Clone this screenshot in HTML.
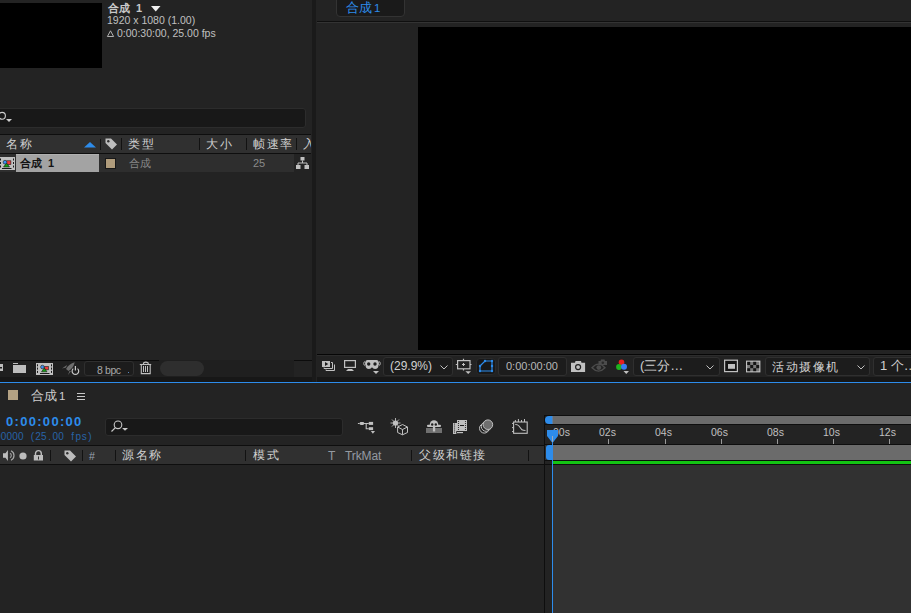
<!DOCTYPE html>
<html><head><meta charset="utf-8">
<style>
*{margin:0;padding:0;box-sizing:border-box}
html,body{width:911px;height:613px;overflow:hidden;background:#232323;font-family:"Liberation Sans",sans-serif;color:#c8c8c8}
.a{position:absolute}
.t{position:absolute;white-space:nowrap;line-height:1}
svg{position:absolute;overflow:visible}
.sep{position:absolute;width:1px;background:#121212}
.dd{position:absolute;background:#1c1c1c;border:1px solid #2f2f2f;border-radius:3px}
</style></head><body>
<!-- PROJECT PANEL -->
<div class="a" style="left:0;top:0;width:312px;height:382px;background:#232323"></div>
<div class="a" style="left:0;top:3px;width:102px;height:65px;background:#000"></div>
<div class="t" style="left:108px;top:3px;font-size:11px;font-weight:bold;color:#c8c8c8">合成&nbsp;&nbsp;1</div>
<svg style="left:151px;top:6px" width="10" height="6"><path d="M0 0H9.5L4.75 5.5Z" fill="#f0f0f0"/></svg>
<div class="t" style="left:107px;top:15px;font-size:10.5px;color:#c0c0c0">1920 x 1080 (1.00)</div>
<svg style="left:107px;top:30px" width="8" height="8"><path d="M3.5 0.8L6.6 6.5H0.4Z" fill="none" stroke="#c0c0c0" stroke-width="0.9"/></svg>
<div class="t" style="left:117px;top:28px;font-size:10.5px;color:#c0c0c0">0:00:30:00, 25.00 fps</div>

<!-- search -->
<div class="a" style="left:-4px;top:108px;width:310px;height:20px;background:#181818;border:1px solid #2c2c2c;border-radius:3px"></div>
<svg style="left:0;top:112px" width="14" height="12"><circle cx="2" cy="3.8" r="3.4" fill="none" stroke="#cfcfcf" stroke-width="1.1"/><path d="M6 7H12L9 10Z" fill="#cfcfcf"/></svg>

<!-- header -->
<div class="a" style="left:0;top:134px;width:311px;height:1px;background:#0e0e0e"></div>
<div class="a" style="left:0;top:135px;width:311px;height:18px;background:#303030"></div>
<div class="a" style="left:0;top:153px;width:311px;height:1px;background:#0e0e0e"></div>
<div class="t" style="left:6px;top:138px;font-size:12px;letter-spacing:1.5px;color:#d0d0d0">名称</div>
<svg style="left:84px;top:142px" width="13" height="6"><path d="M0 5.5L6 0L12 5.5Z" fill="#2d8ceb"/></svg>
<div class="sep" style="left:100px;top:139px;height:11px"></div>
<svg style="left:105px;top:138px" width="13" height="12"><path d="M0.5 0.5H6L12 6.5L7 11.5L0.5 5Z" fill="#bdbdbd"/><circle cx="3.3" cy="3.3" r="1.2" fill="#303030"/></svg>
<div class="sep" style="left:121px;top:138px;height:12px"></div>
<div class="t" style="left:128px;top:138px;font-size:12px;letter-spacing:1.5px;color:#d0d0d0">类型</div>
<div class="sep" style="left:199px;top:138px;height:12px"></div>
<div class="t" style="left:206px;top:138px;font-size:12px;letter-spacing:1.5px;color:#d0d0d0">大小</div>
<div class="sep" style="left:246px;top:138px;height:12px"></div>
<div class="t" style="left:253px;top:138px;font-size:12px;letter-spacing:1.5px;color:#d0d0d0">帧速率</div>
<div class="sep" style="left:296px;top:138px;height:12px"></div>
<div class="t" style="left:303px;top:138px;font-size:12px;color:#d0d0d0;width:8px;overflow:hidden">入</div>

<!-- row -->
<div class="a" style="left:0;top:154px;width:294px;height:18px;background:#2e2e2e"></div>
<div class="a" style="left:16px;top:154px;width:83px;height:18px;background:#a3a3a3;border-top:1px solid #b0b0b0"></div>
<div class="t" style="left:20px;top:158px;font-size:11px;font-weight:bold;color:#141414">合成&nbsp;&nbsp;1</div>
<div class="a" style="left:105px;top:158px;width:11px;height:11px;background:#b09c7c;border:1px solid #181818"></div>
<div class="t" style="left:129px;top:158px;font-size:11px;color:#8a8a8a">合成</div>
<div class="t" style="left:253px;top:158px;font-size:11px;color:#8a8a8a">25</div>
<svg style="left:296px;top:157px" width="13" height="12"><rect x="4.5" y="0" width="4" height="3.5" fill="#c0c0c0"/><path d="M6.5 3.5V6M2 8V6H11V8" stroke="#c0c0c0" fill="none"/><rect x="0" y="8" width="4.5" height="4" fill="#c0c0c0"/><rect x="8.5" y="8" width="4.5" height="4" fill="#c0c0c0"/></svg>
<svg style="left:-2px;top:157px" width="17" height="13"><rect x="0" y="0" width="17" height="13" fill="#c0c0c0"/><g fill="#1a1a1a"><rect x="2" y="1.5" width="1" height="2"/><rect x="2" y="5" width="1" height="2"/><rect x="2" y="8.5" width="1" height="2"/><rect x="15" y="1.5" width="1" height="2"/><rect x="15" y="5" width="1" height="2"/><rect x="15" y="8.5" width="1" height="2"/><rect x="4" y="11" width="9.5" height="1"/></g><rect x="8.7" y="3.8" width="4.2" height="3.7" fill="#f03a3a" stroke="#1a1a1a" stroke-width="0.6"/><path d="M5.5 10L8.6 6L11.5 10Z" fill="#12a012" stroke="#1a1a1a" stroke-width="0.6"/><circle cx="7" cy="5.2" r="1.9" fill="#3a90f0" stroke="#1a1a1a" stroke-width="0.6"/></svg>

<!-- project bottom toolbar -->
<div class="a" style="left:0;top:360px;width:294px;height:17px;background:#1f1f1f"></div>
<div class="a" style="left:0;top:360px;width:159px;height:1px;background:#0c0c0c"></div>
<div class="a" style="left:294px;top:360px;width:18px;height:1px;background:#0c0c0c"></div>
<svg style="left:-4px;top:364px" width="8" height="8"><rect x="0" y="0" width="7" height="7" fill="#bdbdbd"/><rect x="2" y="3" width="4" height="1.5" fill="#1f1f1f"/></svg>
<svg style="left:13px;top:363px" width="14" height="10"><rect x="0" y="0" width="5" height="1" fill="#bdbdbd"/><rect x="0" y="2" width="13" height="8" fill="#bdbdbd"/></svg>
<svg style="left:36px;top:363px" width="17" height="12"><rect x="0" y="0" width="17" height="12" fill="#c0c0c0"/><g fill="#1a1a1a"><rect x="1" y="1.3" width="1" height="2"/><rect x="1" y="4.6" width="1" height="2"/><rect x="1" y="7.9" width="1" height="2"/><rect x="15" y="1.3" width="1" height="2"/><rect x="15" y="4.6" width="1" height="2"/><rect x="15" y="7.9" width="1" height="2"/><rect x="4" y="10" width="9.5" height="1"/></g><rect x="8.7" y="3.5" width="3.7" height="3.3" fill="#f03a3a" stroke="#1a1a1a" stroke-width="0.6"/><path d="M5.5 8.8L8.4 5L11 8.8Z" fill="#12a012" stroke="#1a1a1a" stroke-width="0.6"/><circle cx="6.4" cy="4" r="1.8" fill="#3a90f0" stroke="#1a1a1a" stroke-width="0.6"/></svg>
<svg style="left:60px;top:359px" width="22" height="18"><path d="M14.7 3.2C11 4 8 6.5 6 10L8.5 12C11.5 10.5 14 7 14.7 3.2Z" fill="#6e6e6e"/><path d="M2 9.5L7 6L6 8.5Z" fill="#6e6e6e"/><path d="M8 16L11 12L9.5 12Z" fill="#6e6e6e"/><path d="M13.3 9.6A3.3 3.3 0 1 0 17.5 9.6" fill="none" stroke="#c8c8c8" stroke-width="1.2"/><path d="M15.4 7V11.5" stroke="#c8c8c8" stroke-width="1.2"/></svg>
<div class="dd" style="left:84px;top:361px;width:50px;height:15px"></div>
<div class="t" style="left:97px;top:365px;font-size:10.5px;letter-spacing:-0.4px;color:#a8a8a8">8 bpc</div>
<div class="a" style="left:128px;top:372px;width:1px;height:1px;background:#5a8ac0"></div>
<svg style="left:136px;top:359px" width="20" height="18"><path d="M3.8 5.5H15.2" stroke="#c0c0c0" stroke-width="1.1"/><path d="M7.5 5V4Q9.8 2.2 12.2 4V5" fill="none" stroke="#c0c0c0" stroke-width="1.1"/><path d="M5.3 6V14.6H14.2V6" fill="none" stroke="#c0c0c0" stroke-width="1.1"/><path d="M7.5 7V13M9.5 7V13M11.5 7V13" stroke="#c0c0c0" stroke-width="1"/></svg>
<div class="a" style="left:160px;top:361px;width:44px;height:15px;background:#2e2e2e;border-radius:8px"></div>
<div class="a" style="left:0;top:377px;width:312px;height:5px;background:#171717"></div>

<!-- separator -->
<div class="a" style="left:312px;top:0;width:4px;height:382px;background:#1a1a1a"></div>

<!-- VIEWER PANEL -->
<div class="a" style="left:316px;top:0;width:595px;height:382px;background:#232323"></div>
<div class="a" style="left:336px;top:-4px;width:69px;height:21px;background:#1a1a1a;border:1px solid #333;border-radius:4px"></div>
<div class="t" style="left:346px;top:1px;font-size:13px;color:#2d8ceb">合成<span style="font-size:11.5px;margin-left:2px">1</span></div>
<div class="a" style="left:317px;top:21px;width:594px;height:1px;background:#0f0f0f"></div>
<div class="a" style="left:317px;top:22px;width:594px;height:1px;background:#333"></div>
<div class="a" style="left:418px;top:27px;width:493px;height:323px;background:#000"></div>
<div class="a" style="left:317px;top:354px;width:594px;height:1px;background:#060606"></div>
<div class="a" style="left:317px;top:355px;width:594px;height:1px;background:#2c2c2c"></div>
<div class="a" style="left:317px;top:356px;width:594px;height:21px;background:#222"></div>
<div class="a" style="left:317px;top:377px;width:594px;height:5px;background:#171717"></div>
<!-- viewer toolbar icons -->
<svg style="left:322px;top:361px" width="14" height="11"><rect x="0" y="0" width="8" height="6" fill="#c0c0c0"/><path d="M3 1V5L6.2 3Z" fill="#1a1a1a"/><path d="M9 1.5H10.5V7.5H2V6.5" stroke="#c0c0c0" fill="none"/><path d="M12.5 3.5V9.5H4V8.5" stroke="#c0c0c0" fill="none"/></svg>
<svg style="left:344px;top:360px" width="13" height="12"><rect x="0.6" y="0.6" width="10.8" height="6.8" fill="none" stroke="#c0c0c0" stroke-width="1.2"/><path d="M4 9H8L10 11H2Z" fill="#c0c0c0"/></svg>
<svg style="left:363px;top:359px" width="18" height="16"><path d="M2.5 2.5Q2.5 1 4.5 1H13.5Q15.5 1 15.5 2.5V6Q15.5 10 12 10Q10 10 9 8.2Q8 10 6 10Q2.5 10 2.5 6Z" fill="#c0c0c0"/><circle cx="5.7" cy="5" r="1.7" fill="#1e1e1e"/><circle cx="12" cy="5" r="1.7" fill="#1e1e1e"/><ellipse cx="1.6" cy="4.5" rx="0.9" ry="1.7" fill="none" stroke="#c0c0c0" stroke-width="0.9"/><ellipse cx="16.4" cy="4.5" rx="0.9" ry="1.7" fill="none" stroke="#c0c0c0" stroke-width="0.9"/><path d="M10 12H16L13 15Z" fill="#c0c0c0"/></svg>
<div class="dd" style="left:383px;top:357px;width:70px;height:19px"></div>
<div class="t" style="left:390px;top:360px;font-size:12px;color:#d0d0d0">(29.9%)</div>
<svg style="left:440px;top:365px" width="8" height="5"><path d="M0.5 0.5L4 4L7.5 0.5" fill="none" stroke="#c0c0c0"/></svg>
<svg style="left:455px;top:358px" width="18" height="17"><rect x="2.6" y="2.6" width="12.4" height="8.2" fill="none" stroke="#c0c0c0" stroke-width="1.2"/><path d="M8.5 0.8V2.5M8.5 11V12.5M0.8 6.5H2.5M15 6.5H16.5" stroke="#c0c0c0" stroke-width="1.2"/><path d="M8.5 5V8M7 6.5H10" stroke="#c0c0c0"/><path d="M10.4 13.2H16L13.2 16Z" fill="#c0c0c0"/></svg>
<div class="a" style="left:476px;top:358px;width:20px;height:17px;background:#181818;border:1px solid #2a2a2a;border-radius:4px"></div>
<svg style="left:476px;top:358px" width="20" height="17"><path d="M4 8L9 3H16V13H4Z" fill="none" stroke="#2d8ceb" stroke-width="1.2"/><g fill="#2d8ceb"><circle cx="4" cy="8" r="1.2"/><circle cx="9" cy="3" r="1.2"/><circle cx="16" cy="3" r="1.2"/><circle cx="16" cy="8" r="1.2"/><circle cx="16" cy="13" r="1.2"/><circle cx="4" cy="13" r="1.2"/></g></svg>
<div class="dd" style="left:498px;top:357px;width:69px;height:19px"></div>
<div class="t" style="left:506px;top:361px;font-size:11px;color:#b8b8b8">0:00:00:00</div>
<svg style="left:570px;top:360px" width="16" height="13"><path d="M1 2.7H5L5.5 1H11L11.5 2.7H15.1V11.9H1Z" fill="#c0c0c0"/><circle cx="8.1" cy="7.1" r="2.5" fill="none" stroke="#1e1e1e" stroke-width="1.2"/></svg>
<svg style="left:591px;top:358px" width="18" height="15"><path d="M1 9.8Q7.5 2.5 14 9.8Q7.5 16.5 1 9.8Z" fill="none" stroke="#4c4c4c" stroke-width="1.4"/><circle cx="7.8" cy="9.6" r="2.4" fill="#4c4c4c"/><path d="M7.5 3H9.5L10 1.5H13.5L14 3H16V7H7.5Z" fill="#4c4c4c"/><circle cx="11.8" cy="4.8" r="1.3" fill="#2a2a2a"/></svg>
<svg style="left:616px;top:359px" width="14" height="16"><circle cx="5.5" cy="3.3" r="2.8" fill="#e81e1e"/><circle cx="3" cy="8" r="2.9" fill="#1eb41e"/><circle cx="8" cy="7.7" r="3" fill="#3a7cf0"/><path d="M7.5 12H13L10.25 15Z" fill="#c0c0c0"/></svg>
<div class="dd" style="left:633px;top:357px;width:87px;height:19px"></div>
<div class="t" style="left:640px;top:359px;font-size:13px;color:#d0d0d0">(三分…</div>
<svg style="left:706px;top:365px" width="8" height="5"><path d="M0.5 0.5L4 4L7.5 0.5" fill="none" stroke="#c0c0c0"/></svg>
<svg style="left:724px;top:359px" width="15" height="14"><rect x="0.6" y="1.2" width="12.8" height="11.4" fill="#141414" stroke="#c0c0c0" stroke-width="1.2"/><rect x="4" y="5" width="7" height="4.8" fill="#c0c0c0"/></svg>
<svg style="left:746px;top:360px" width="15" height="13"><rect x="0.6" y="1.2" width="13.2" height="10.6" fill="#7a7a7a" stroke="#c0c0c0" stroke-width="1.2"/><g fill="#141414"><rect x="1.2" y="1.8" width="3" height="3.2"/><rect x="7.2" y="1.8" width="3" height="3.2"/><rect x="4.2" y="5" width="3" height="3.2"/><rect x="10.2" y="5" width="3" height="3.2"/><rect x="1.2" y="8.2" width="3" height="3"/><rect x="7.2" y="8.2" width="3" height="3"/></g></svg>
<div class="dd" style="left:765px;top:357px;width:105px;height:19px"></div>
<div class="t" style="left:772px;top:361px;font-size:12px;letter-spacing:1.5px;color:#d0d0d0">活动摄像机</div>
<svg style="left:857px;top:365px" width="8" height="5"><path d="M0.5 0.5L4 4L7.5 0.5" fill="none" stroke="#c0c0c0"/></svg>
<div class="dd" style="left:873px;top:357px;width:50px;height:19px"></div>
<div class="t" style="left:880px;top:359px;font-size:13px;color:#d0d0d0">1 个…</div>

<!-- blue line -->
<div class="a" style="left:0;top:382px;width:911px;height:1px;background:#2d8ceb"></div>

<!-- TIMELINE PANEL -->
<div class="a" style="left:0;top:383px;width:911px;height:230px;background:#232323"></div>
<div class="a" style="left:8px;top:390px;width:10px;height:10px;background:#b4a283"></div>
<div class="t" style="left:31px;top:389px;font-size:13px;color:#d0d0d0">合成<span style="font-size:11.5px;margin-left:2px">1</span></div>
<svg style="left:77px;top:393px" width="9" height="8"><path d="M0 0.5H8M0 3.5H8M0 6.5H8" stroke="#c8c8c8"/></svg>
<div class="t" style="left:6px;top:415px;font-size:13px;font-weight:bold;letter-spacing:1.3px;color:#2d8ceb">0:00:00:00</div>
<div class="t" style="left:-5px;top:432px;font-size:10px;color:#2864a8"><span style="display:inline-block;width:5.75px;text-align:center">0</span><span style="display:inline-block;width:5.75px;text-align:center">0</span><span style="display:inline-block;width:5.75px;text-align:center">0</span><span style="display:inline-block;width:5.75px;text-align:center">0</span><span style="display:inline-block;width:5.75px;text-align:center">0</span><span style="display:inline-block;width:5.75px;text-align:center">&nbsp;</span><span style="display:inline-block;width:5.75px;text-align:center">(</span><span style="display:inline-block;width:5.75px;text-align:center">2</span><span style="display:inline-block;width:5.75px;text-align:center">5</span><span style="display:inline-block;width:5.75px;text-align:center">.</span><span style="display:inline-block;width:5.75px;text-align:center">0</span><span style="display:inline-block;width:5.75px;text-align:center">0</span><span style="display:inline-block;width:5.75px;text-align:center">&nbsp;</span><span style="display:inline-block;width:5.75px;text-align:center">f</span><span style="display:inline-block;width:5.75px;text-align:center">p</span><span style="display:inline-block;width:5.75px;text-align:center">s</span><span style="display:inline-block;width:5.75px;text-align:center">)</span></div>
<div class="a" style="left:105px;top:418px;width:238px;height:18px;background:#181818;border:1px solid #2c2c2c;border-radius:3px"></div>
<svg style="left:111px;top:420px" width="18" height="14"><circle cx="7" cy="4.8" r="3.8" fill="none" stroke="#c8c8c8" stroke-width="1.1"/><path d="M4.4 7.6L0.5 11.5" stroke="#c8c8c8" stroke-width="1.2"/><path d="M11.1 8H17L14 10.8Z" fill="#c8c8c8"/></svg>
<!-- timeline switches icons -->
<svg style="left:352px;top:414px" width="26" height="22"><path d="M5.9 9.5H7.6M12 9.5H16.8M14.2 9.5V14.7H16.8" stroke="#c0c0c0" stroke-width="1.1" fill="none"/><rect x="7.6" y="7.9" width="4.6" height="3" rx="1.3" fill="#c0c0c0"/><rect x="16.8" y="7.9" width="4.3" height="3" fill="#c0c0c0"/><rect x="16.8" y="13.2" width="4.3" height="2.9" fill="#c0c0c0"/><path d="M18.8 17.1H23L20.9 19.8Z" fill="#c0c0c0"/></svg>
<svg style="left:388px;top:416px" width="22" height="21"><g stroke="#c0c0c0" stroke-width="0.9"><path d="M7.5 2V12M2.5 7H12.5M4 3.5L11 10.5M11 3.5L4 10.5"/></g><circle cx="7.5" cy="7" r="2.6" fill="#c0c0c0"/><path d="M14.5 8L20 10.8V16.5L14.5 19L9 16.5V10.8Z" fill="#232323"/><path d="M14.5 8.5L19.5 11V16.5L14.5 18.8L9.6 16.5V11Z M9.6 11L14.5 13.5L19.5 11M14.5 13.5V18.8" fill="none" stroke="#c0c0c0" stroke-width="1" stroke-linejoin="round"/></svg>
<svg style="left:422px;top:415px" width="24" height="22"><rect x="4" y="13" width="16" height="5" fill="#707070"/><path d="M7.7 11.5V10A4.3 4.8 0 0 1 16.3 10V11.5Z" fill="#c0c0c0"/><rect x="5" y="9.7" width="14" height="2.2" rx="1" fill="#c0c0c0"/><circle cx="10.2" cy="9.5" r="1.2" fill="#1e1e1e"/><circle cx="13.8" cy="9.5" r="1.2" fill="#1e1e1e"/><rect x="10.9" y="11.5" width="2.3" height="5" fill="#c0c0c0"/></svg>
<svg style="left:452px;top:419px" width="17" height="16"><path d="M1 4H5V13H11V15H1Z" fill="#c0c0c0"/><rect x="5" y="1" width="10" height="11" fill="#c0c0c0"/><g fill="#1e1e1e"><circle cx="2.5" cy="5" r="0.6"/><circle cx="2.5" cy="7" r="0.6"/><circle cx="2.5" cy="9" r="0.6"/><circle cx="2.5" cy="11" r="0.6"/><circle cx="2.5" cy="13" r="0.6"/><circle cx="6.5" cy="2.5" r="0.6"/><circle cx="6.5" cy="4.5" r="0.6"/><circle cx="6.5" cy="6.5" r="0.6"/><circle cx="6.5" cy="8.5" r="0.6"/><circle cx="6.5" cy="10.5" r="0.6"/><circle cx="13.5" cy="2.5" r="0.6"/><circle cx="13.5" cy="4.5" r="0.6"/><circle cx="13.5" cy="6.5" r="0.6"/><circle cx="13.5" cy="8.5" r="0.6"/><circle cx="13.5" cy="10.5" r="0.6"/><rect x="8" y="6" width="4" height="1"/></g><path d="M4.5 12.2V14.5H11" fill="none" stroke="#1e1e1e" stroke-width="0.8"/></svg>
<svg style="left:478px;top:419px" width="16" height="16"><circle cx="6.3" cy="9.3" r="4.8" fill="#232323" stroke="#c0c0c0" stroke-width="1"/><circle cx="8.1" cy="7.5" r="4.8" fill="#232323" stroke="#c0c0c0" stroke-width="1"/><circle cx="9.9" cy="5.7" r="4.8" fill="#6e6e6e" stroke="#c0c0c0" stroke-width="1"/></svg>
<svg style="left:508px;top:414px" width="24" height="24"><rect x="5.6" y="8" width="13.6" height="11.3" fill="none" stroke="#c0c0c0" stroke-width="1.1"/><path d="M7.4 6V8M10.4 5V8M13.5 6V8M16.5 5V8M4 9.4H5.6M4 13.6H5.6M4 17.6H5.6" stroke="#c0c0c0" stroke-width="1"/><path d="M7.3 10.5Q9.5 10.3 11 12Q12.5 14 14 15.8Q15 16.5 17.5 16.5" fill="none" stroke="#c0c0c0" stroke-width="1.1"/></svg>

<div class="a" style="left:0;top:445px;width:544px;height:1px;background:#0e0e0e"></div>
<div class="a" style="left:0;top:446px;width:544px;height:18px;background:#303030"></div>
<div class="a" style="left:0;top:464px;width:544px;height:1px;background:#0e0e0e"></div>
<svg style="left:2px;top:449px" width="16" height="14"><path d="M1 4.3H3.5L5.9 1V12L3.5 8.7H1Z" fill="#bdbdbd"/><path d="M8.05 4.33A2.5 2.5 0 0 1 8.05 8.67" fill="none" stroke="#9a9a9a" stroke-width="1.2"/><path d="M9 1.79A5.2 5.2 0 0 1 9 11.21" fill="none" stroke="#a8a8a8" stroke-width="1.2"/></svg>
<svg style="left:19px;top:452px" width="8" height="8"><circle cx="4" cy="4" r="3.6" fill="#bdbdbd"/></svg>
<svg style="left:33px;top:450px" width="11" height="11"><path d="M2.5 5V3.5A2.9 2.9 0 0 1 8.3 3.5V5" fill="none" stroke="#bdbdbd" stroke-width="1.4"/><rect x="0.8" y="5" width="9.2" height="5.5" fill="#bdbdbd"/><rect x="5" y="6.5" width="1" height="3" fill="#303030"/></svg>
<div class="sep" style="left:50px;top:450px;height:11px"></div>
<svg style="left:64px;top:450px" width="13" height="12"><path d="M0.5 0.5H6L12 6.5L7 11.5L0.5 5Z" fill="#bdbdbd"/><circle cx="3.3" cy="3.3" r="1.2" fill="#303030"/></svg>
<div class="sep" style="left:82px;top:450px;height:11px"></div>
<div class="t" style="left:89px;top:451px;font-size:10.5px;color:#9aa4b0">#</div>
<div class="sep" style="left:115px;top:450px;height:11px"></div>
<div class="t" style="left:122px;top:449px;font-size:12px;letter-spacing:1.5px;color:#d0d0d0">源名称</div>
<div class="sep" style="left:245px;top:450px;height:11px"></div>
<div class="t" style="left:253px;top:449px;font-size:12px;letter-spacing:1.5px;color:#d0d0d0">模式</div>
<div class="t" style="left:328px;top:450px;font-size:12px;color:#949aa2">T</div>
<div class="t" style="left:345px;top:450px;font-size:12px;letter-spacing:-0.1px;color:#949aa2">TrkMat</div>
<div class="sep" style="left:411px;top:450px;height:11px"></div>
<div class="t" style="left:419px;top:449px;font-size:12px;letter-spacing:1.5px;color:#d0d0d0">父级和链接</div>
<div class="sep" style="left:528px;top:450px;height:11px"></div>

<!-- timeline right -->
<div class="a" style="left:544px;top:415px;width:1px;height:198px;background:#0e0e0e"></div>
<div class="a" style="left:544px;top:415px;width:367px;height:1px;background:#0e0e0e"></div>
<div class="a" style="left:545px;top:416px;width:366px;height:8px;background:#6b6b6b"></div>
<div class="a" style="left:545px;top:416px;width:8px;height:8px;background:#232323"></div>
<div class="a" style="left:545px;top:416px;height:8px;background:#2d8ceb;border-radius:4px 0 0 4px;width:7px"></div>
<div class="a" style="left:545px;top:424px;width:366px;height:1px;background:#0e0e0e"></div>
<div class="a" style="left:545px;top:425px;width:366px;height:19px;background:#232323"></div>
<div class="a" style="left:545px;top:444px;width:366px;height:1px;background:#0e0e0e"></div>
<div class="a" style="left:545px;top:445px;width:366px;height:15px;background:#6b6b6b"></div>
<div class="a" style="left:545px;top:445px;width:8px;height:15px;background:#303030"></div>
<div class="a" style="left:546px;top:445px;width:6px;height:15px;background:#2d8ceb;border-radius:3px 0 0 3px"></div>
<div class="a" style="left:545px;top:460px;width:366px;height:1px;background:#0e0e0e"></div>
<div class="a" style="left:553px;top:461px;width:358px;height:3px;background:#14c414"></div>
<div class="a" style="left:545px;top:464px;width:366px;height:1px;background:#0e0e0e"></div>
<div class="a" style="left:553px;top:465px;width:358px;height:148px;background:#313131"></div>
<!-- ruler labels -->
<div class="t" style="left:599px;top:427px;font-size:10.5px;color:#c0c0c0">02s</div>
<div class="t" style="left:655px;top:427px;font-size:10.5px;color:#c0c0c0">04s</div>
<div class="t" style="left:711px;top:427px;font-size:10.5px;color:#c0c0c0">06s</div>
<div class="t" style="left:767px;top:427px;font-size:10.5px;color:#c0c0c0">08s</div>
<div class="t" style="left:823px;top:427px;font-size:10.5px;color:#c0c0c0">10s</div>
<div class="t" style="left:879px;top:427px;font-size:10.5px;color:#c0c0c0">12s</div>
<div class="t" style="left:553px;top:427px;font-size:10.5px;color:#c0c0c0">00s</div>
<div class="a" style="left:608px;top:439px;width:1px;height:5px;background:#9a9a9a"></div>
<div class="a" style="left:665px;top:439px;width:1px;height:5px;background:#9a9a9a"></div>
<div class="a" style="left:721px;top:439px;width:1px;height:5px;background:#9a9a9a"></div>
<div class="a" style="left:777px;top:439px;width:1px;height:5px;background:#9a9a9a"></div>
<div class="a" style="left:833px;top:439px;width:1px;height:5px;background:#9a9a9a"></div>
<div class="a" style="left:889px;top:439px;width:1px;height:5px;background:#9a9a9a"></div>
<svg style="left:547px;top:430px" width="12" height="14"><path d="M0 0H11V6L5.5 13L0 6Z" fill="#2d8ceb"/></svg>
<div class="a" style="left:552px;top:442px;width:1px;height:171px;background:#2d8ceb"></div>
<div class="a" style="left:552px;top:416px;width:1px;height:8px;background:#5a7fa8"></div>
<div class="a" style="left:552px;top:436px;width:1px;height:6px;background:#9ab"></div>
</body></html>
